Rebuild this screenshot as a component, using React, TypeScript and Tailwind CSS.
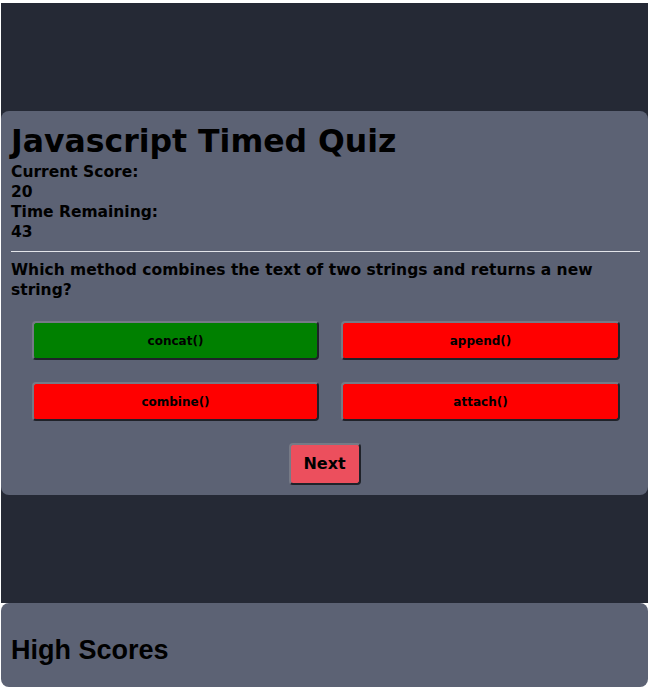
export default function App() {
  const font = { fontFamily: '"DejaVu Sans", Verdana, sans-serif' };
  const btn =
    "h-[39px] rounded-[4px] border-2 border-t-[#767a86] border-l-[#767a86] border-r-[#1f2229] border-b-[#1f2229] text-[12px] font-bold text-black flex items-center justify-center";
  return (
    <div className="min-h-screen bg-white pt-[3px] pl-[1px]" style={font}>
      <div className="bg-[#252935] py-[108px]">
        <div className="rounded-lg bg-[#5c6274] px-[10px] pt-[12px] pb-[10px] text-black">
          <h1 className="text-[31.5px] leading-[36px] font-bold">Javascript Timed Quiz</h1>
          <div className="mt-[3px] text-[15.5px] leading-[20px] font-bold">
            <div>Current Score:</div>
            <div>20</div>
            <div>Time Remaining:</div>
            <div>43</div>
          </div>
          <div className="mt-[9px] -mr-[2px] h-px bg-[#e3e5ea]" />
          <p className="mt-[8px] text-[15.5px] leading-[20px] font-bold">
            Which method combines the text of two strings and returns a new string?
          </p>
          <div className="mt-[21px] ml-[21px] grid grid-cols-[287px_279px] gap-x-[22px] gap-y-[22px]">
            <button className={btn + " bg-[#008000]"} style={font}>concat()</button>
            <button className={btn + " bg-[#ff0000]"} style={font}>append()</button>
            <button className={btn + " bg-[#ff0000]"} style={font}>combine()</button>
            <button className={btn + " bg-[#ff0000]"} style={font}>attach()</button>
          </div>
          <div className="mt-[22px] flex justify-center">
            <button
              className="h-[42px] w-[72px] rounded-[4px] border-2 border-t-[#767a86] border-l-[#767a86] border-r-[#1f2229] border-b-[#1f2229] bg-[#ec4f5d] text-[16px] font-bold text-black"
              style={font}
            >
              Next
            </button>
          </div>
        </div>
      </div>
      <div className="rounded-lg bg-[#5c6274] px-[10px] pt-[32px] pb-[21px]">
        <h2
          className="text-[27px] leading-[31px] font-bold text-black"
          style={{ fontFamily: '"Liberation Sans", Arial, sans-serif' }}
        >
          High Scores
        </h2>
      </div>
    </div>
  );
}
